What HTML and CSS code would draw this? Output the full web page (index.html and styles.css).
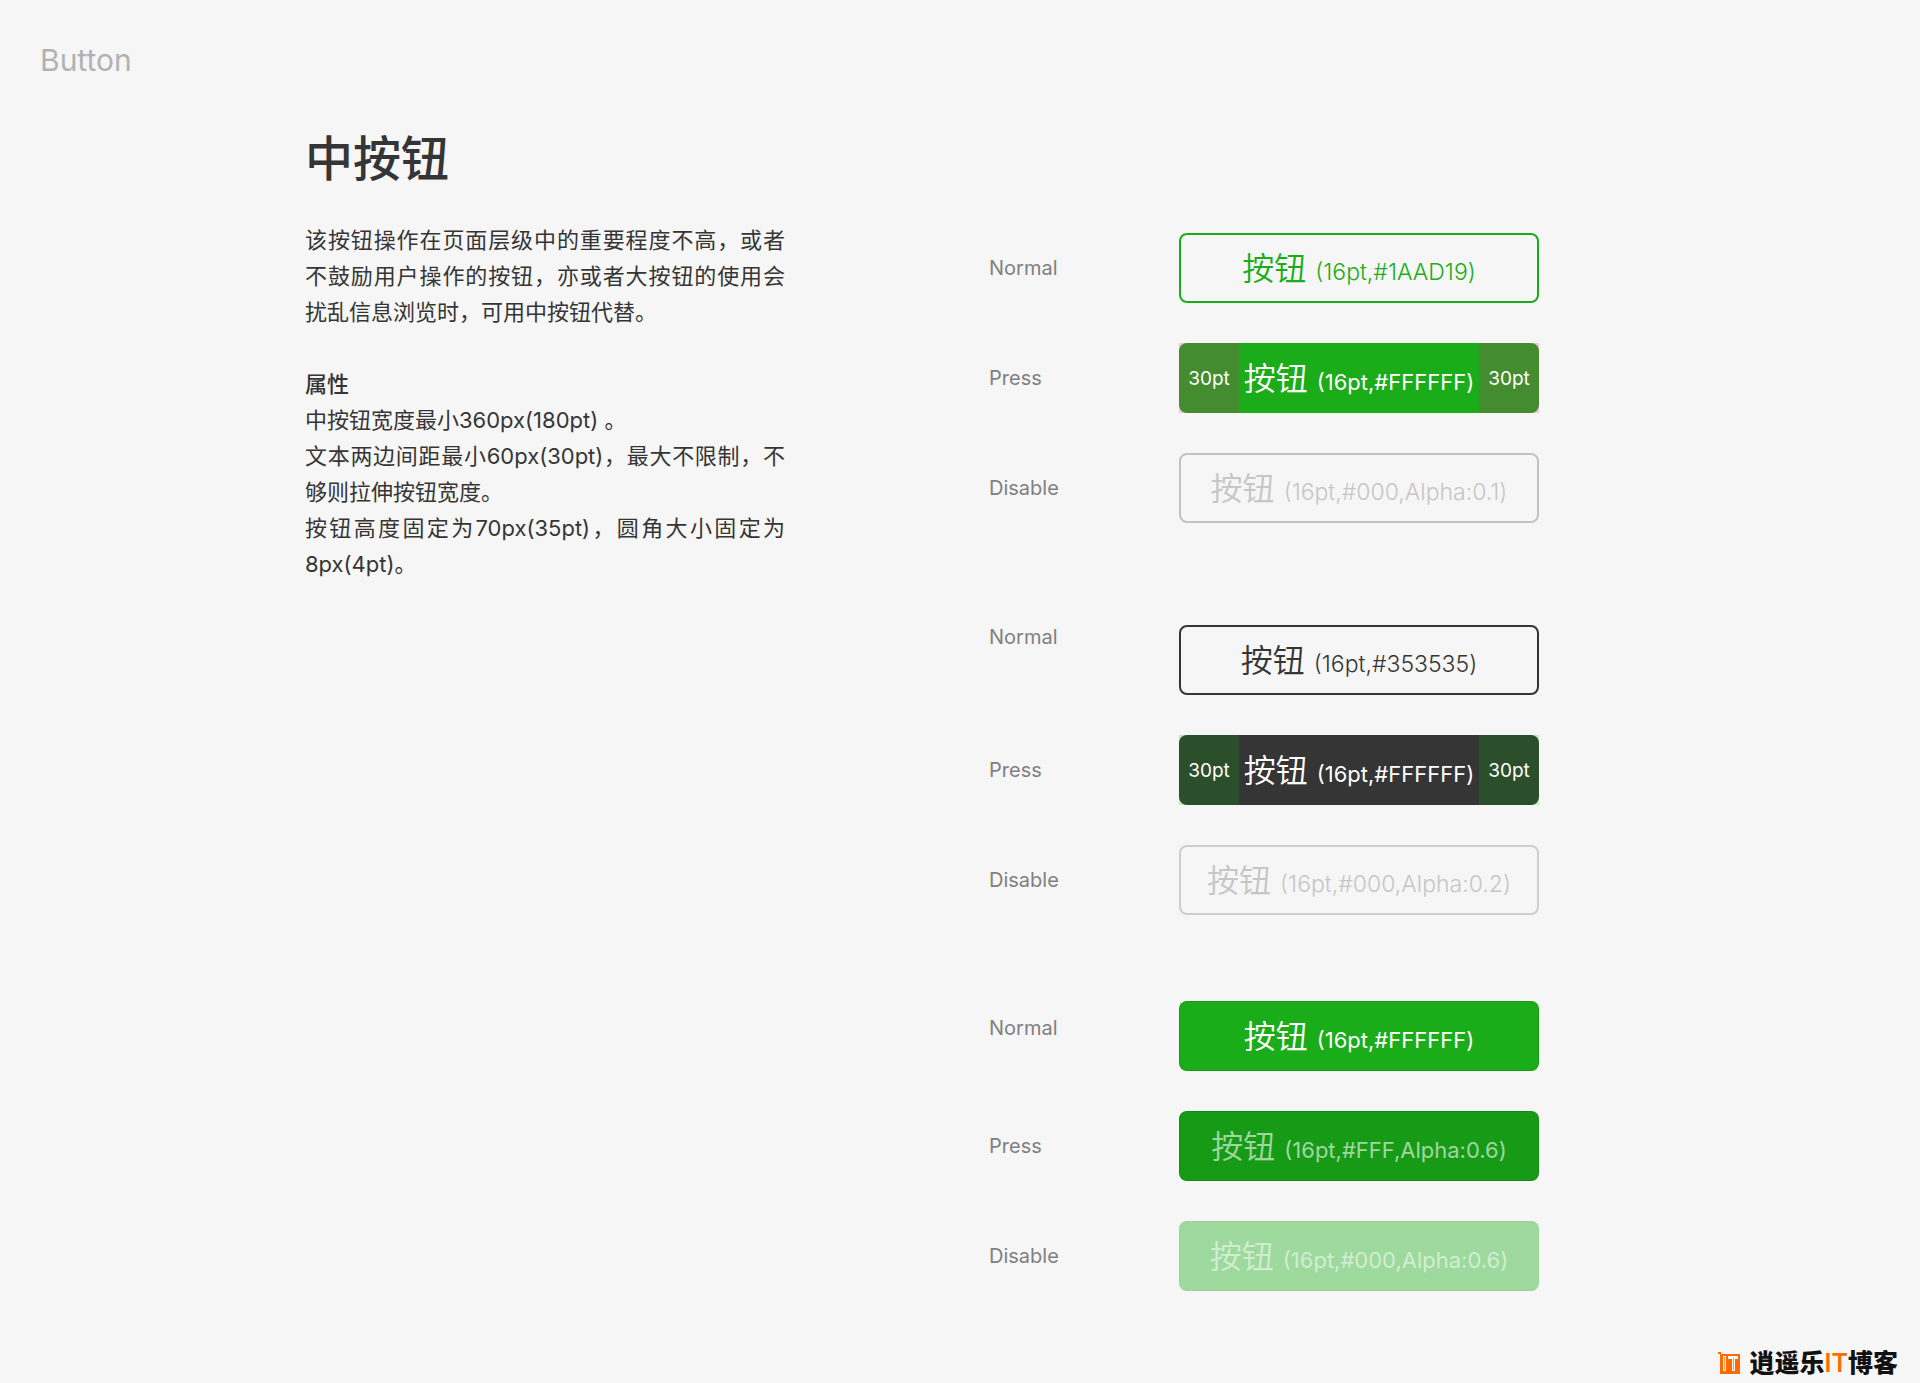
FILE: index.html
```html
<!DOCTYPE html>
<html lang="zh-CN">
	<head>
		<meta charset="utf-8">
		<meta name="viewport" content="width=device-width, initial-scale=1">
		<title>Button</title>
		<link rel="stylesheet" href="styles.css">
	</head>
	<body>
		<header class="page-header">Button</header>
		<main class="content">
			<article class="intro">
				<h1 class="title">中按钮</h1>
				<p>该按钮操作在页面层级中的重要程度不高，或者不鼓励用户操作的按钮，亦或者大按钮的使用会扰乱信息浏览时，可用中按钮代替。</p>
				<h2 class="subtitle">属性</h2>
				<p>中按钮宽度最小360px(180pt) 。</p>
				<p>文本两边间距最小60px(30pt)，最大不限制，不够则拉伸按钮宽度。</p>
				<p>按钮高度固定为70px(35pt)，圆角大小固定为<span class="nowrap">8px(4pt)</span>。</p>
			</article>
			<div class="demos">
				<section class="group">
					<div class="row">
						<label class="state" for="green-normal">Normal</label>
						<button class="btn line-green" id="green-normal"><span class="text">按钮 <small>(16pt,#1AAD19)</small></span></button>
					</div>
					<div class="row">
						<label class="state" for="green-press">Press</label>
						<button class="btn press-green" id="green-press"><span class="inset">30pt</span><span class="text">按钮 <small>(16pt,#FFFFFF)</small></span><span class="inset">30pt</span></button>
					</div>
					<div class="row">
						<label class="state" for="green-disable">Disable</label>
						<button class="btn line-disable" id="green-disable" disabled><span class="text">按钮 <small>(16pt,#000,Alpha:0.1)</small></span></button>
					</div>
				</section>
				<section class="group group-dark">
					<div class="row">
						<label class="state" for="dark-normal">Normal</label>
						<button class="btn line-dark" id="dark-normal"><span class="text">按钮 <small>(16pt,#353535)</small></span></button>
					</div>
					<div class="row">
						<label class="state" for="dark-press">Press</label>
						<button class="btn press-dark" id="dark-press"><span class="inset">30pt</span><span class="text">按钮 <small>(16pt,#FFFFFF)</small></span><span class="inset">30pt</span></button>
					</div>
					<div class="row">
						<label class="state" for="dark-disable">Disable</label>
						<button class="btn line-disable light" id="dark-disable" disabled><span class="text">按钮 <small>(16pt,#000,Alpha:0.2)</small></span></button>
					</div>
				</section>
				<section class="group group-fill">
					<div class="row">
						<label class="state" for="fill-normal">Normal</label>
						<button class="btn fill" id="fill-normal"><span class="text">按钮 <small>(16pt,#FFFFFF)</small></span></button>
					</div>
					<div class="row">
						<label class="state" for="fill-press">Press</label>
						<button class="btn fill fill-press" id="fill-press"><span class="text">按钮 <small>(16pt,#FFF,Alpha:0.6)</small></span></button>
					</div>
					<div class="row">
						<label class="state" for="fill-disable">Disable</label>
						<button class="btn fill fill-disable" id="fill-disable" disabled><span class="text">按钮 <small>(16pt,#000,Alpha:0.6)</small></span></button>
					</div>
				</section>
			</div>
		</main>
		<footer class="page-footer">
			<svg class="logo" width="22" height="22" viewBox="0 0 22 22" aria-hidden="true">
				<path fill="#ff6a00" d="M0 0h3v2H0zM2 2h20v20H2z"/>
				<path fill="#f6f6f6" d="M5 4h3v15H5zM10 4h10v3h-3v12h-3V7h-4z"/>
				<path fill="#ff9a50" d="M6 5h1v13H6zM15 6h1v12h-1z"/>
			</svg>
			<span class="brand">逍遥乐<em>IT</em>博客</span>
		</footer>
	</body>
</html>
```
FILE: styles.css
```css
* {
	box-sizing: border-box;
}

body {
	margin: 0;
	min-height: 100vh;
	display: flex;
	flex-direction: column;
	background-color: #f6f6f6;
	color: #353535;
	font-family: Inter, "Noto Sans CJK SC", sans-serif;
	font-size: 22px;
	line-height: 36px;
}

.page-header {
	padding: 40px 40px 0;
	font-size: 30px;
	line-height: 40px;
	color: #b2b2b2;
}

.content {
	display: flex;
	justify-content: space-between;
	gap: 40px;
	padding: 48px 381px 40px 305px;
}

.intro {
	flex: 0 1 480px;
	text-align: justify;
}

.intro p {
	margin: 0;
}

.title {
	margin: 0 0 32px;
	font-size: 48px;
	font-weight: 500;
	line-height: 62px;
}

.subtitle {
	margin: 36px 0 0;
	font-size: 22px;
	font-weight: 500;
	line-height: 36px;
}

.nowrap {
	white-space: nowrap;
}

.demos {
	flex: 0 1 550px;
	padding-top: 105px;
}

.group {
	display: flex;
	flex-direction: column;
	gap: 40px;
}

.group-dark {
	margin-top: 102px;
}

.group-fill {
	margin-top: 86px;
}

.row {
	display: flex;
	align-items: center;
	justify-content: space-between;
}

.state {
	color: #808080;
	font-size: 20px;
	line-height: 24px;
}

.group-dark .row:first-child .state {
	padding-bottom: 46px;
}

.group-fill .row:first-child .state {
	padding-bottom: 16px;
}

.btn {
	display: flex;
	justify-content: center;
	width: 360px;
	height: 70px;
	padding: 0;
	border: 0;
	border-radius: 8px;
	background-color: transparent;
	color: #fff;
	font-family: inherit;
	font-size: 32px;
	font-weight: 350;
	line-height: 70px;
	white-space: nowrap;
}

.btn small {
	font-size: 23px;
}

.text {
	flex: 1;
	padding-top: 1px;
}

.line-green,
.line-dark,
.line-disable {
	border: 2px solid;
	line-height: 66px;
}

.line-green {
	color: #1aad19;
}

.line-dark {
	color: #353535;
}

.line-disable {
	border-color: #c2c2c2;
	color: #c6c6c6;
}

.line-disable.light {
	border-color: #cdcdcd;
}

.press-green {
	background-color: #1aad19;
}

.press-dark {
	background-color: #353535;
}

/* side spacing markers */
.inset {
	width: 60px;
	padding-top: 1px;
	font-size: 19px;
	font-weight: 400;
	background-color: rgba(236, 8, 140, 0.2);
}

.press-dark .inset {
	background-color: rgba(3, 178, 3, 0.2);
}

.press-green > span,
.press-dark > span {
	height: 70px;
}

.press-green small,
.press-dark small,
.fill small {
	font-size: 22px;
	font-weight: 400;
}

.fill {
	background-color: #1aad19;
	box-shadow: inset 0 0 0 1px rgba(0, 0, 0, 0.1);
}

.fill-press {
	background-color: #179b16;
	color: rgba(255, 255, 255, 0.6);
}

.fill-disable {
	background-color: #9eda9d;
	color: rgba(255, 255, 255, 0.55);
	box-shadow: inset 0 0 0 1px rgba(0, 0, 0, 0.03);
}

.page-footer {
	display: flex;
	align-items: center;
	justify-content: flex-end;
	gap: 10px;
	margin-top: auto;
	padding: 0 22px 8px;
}

.brand {
	color: #111;
	font-size: 25px;
	font-weight: 900;
	line-height: 24px;
}

.brand em {
	color: #ff6a00;
	font-style: normal;
	font-weight: 600;
}
```
